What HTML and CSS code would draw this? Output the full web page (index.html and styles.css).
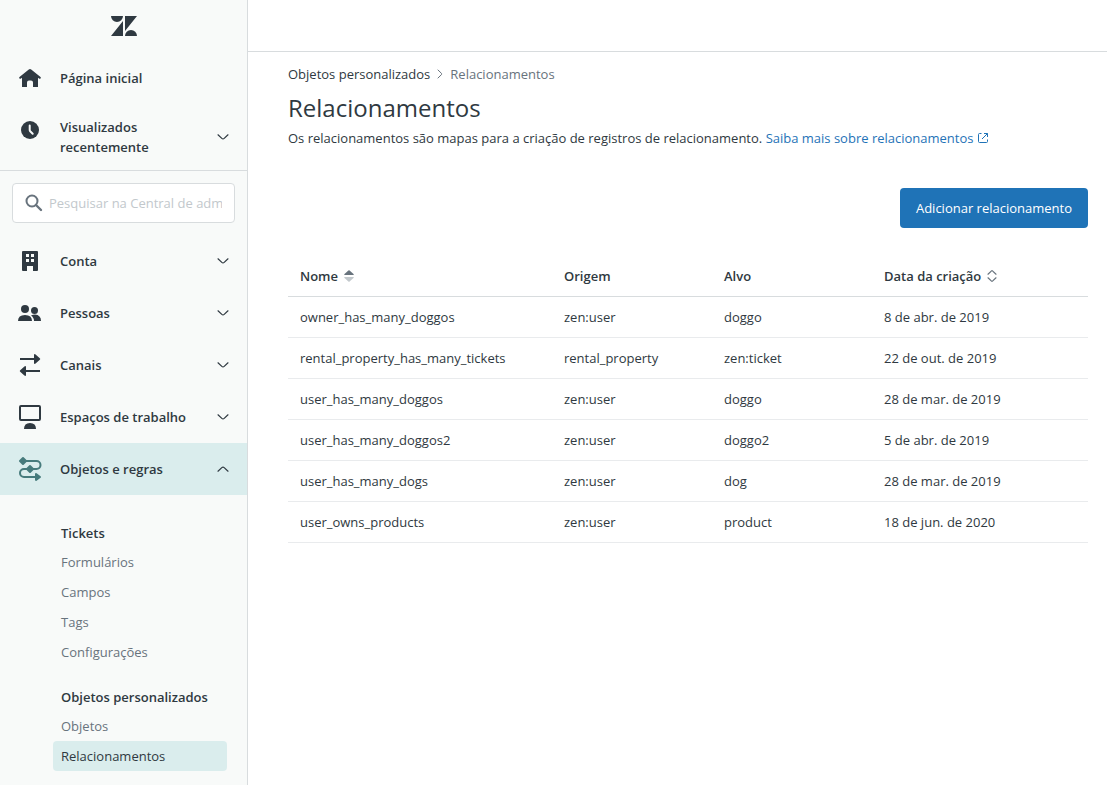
FILE: index.html
```html
<!DOCTYPE html>
<html lang="pt-BR">
<head>
<meta charset="utf-8">
<meta name="viewport" content="width=device-width, initial-scale=1">
<title>Relacionamentos</title>
<link rel="stylesheet" href="styles.css">
</head>
<body>
<svg class="defs" aria-hidden="true">
  <symbol id="chevron" viewBox="0 0 12 6"><path d="M1 .8 4.800 4.400q1.200 1 2.400 0L11 .8" fill="none" stroke="currentColor" stroke-width="1.200" stroke-linecap="round"/></symbol>
</svg>
<div class="app">
  <aside class="sidebar">
    <a class="logo" href="#" aria-label="Zendesk">
      <svg width="26" height="20" viewBox="0 0 26 20" fill="currentColor"><path d="M0 0h12a6 6 0 0 1-12 0zM12 5v15H0zM14 0h12L14 15zM14 20a6 6 0 0 1 12 0z"/></svg>
    </a>
    <nav class="nav">
      <a class="nav-item" href="#">
        <svg class="icon" viewBox="0 0 26 26" fill="currentColor"><path d="M13 4q.6 0 1.200.5L23.500 12q.8.900 0 1.500-.8.600-1.500 0l-1-.7V22h-5v-4.500q0-2-2-2h-2q-2 0-2 2V22H5v-9.200l-1 .7q-.8.600-1.500 0-.8-.7 0-1.500L11.800 4.500Q12.400 4 13 4z"/></svg>
        <span class="label">Página inicial</span>
      </a>
      <button class="nav-item recent" type="button">
        <svg class="icon" viewBox="0 0 26 26"><circle cx="13" cy="13" r="9" fill="currentColor"/><path d="M12.700 8.500v4.500q0 .8.500 1.300l2.500 2.500" fill="none" stroke="#f8f9f9" stroke-width="2" stroke-linecap="round"/></svg>
        <span class="label">Visualizados recentemente</span>
        <svg class="chevron"><use href="#chevron"/></svg>
      </button>
    </nav>
    <div class="search-area">
      <label class="search">
        <svg width="18" height="18" viewBox="0 0 18 18" fill="none" stroke="currentColor" stroke-width="2"><circle cx="7" cy="7" r="5.500"/><path d="m11 11 5 5" stroke-width="2.400" stroke-linecap="round"/></svg>
        <input type="text" aria-label="Pesquisar na Central de administração" placeholder="Pesquisar na Central de administração">
      </label>
    </div>
    <nav class="nav">
      <button class="nav-item" type="button">
        <svg class="icon" viewBox="0 0 26 26" fill="currentColor"><path fill-rule="evenodd" d="M6 3h14q1 0 1 1v18q0 1-1 1h-4v-5h-6v5H6q-1 0-1-1V4q0-1 1-1zM9 6v3h3V6zM14 6v3h3V6zM9 11v3h3v-3zM14 11v3h3v-3z"/></svg>
        <span class="label">Conta</span>
        <svg class="chevron"><use href="#chevron"/></svg>
      </button>
      <button class="nav-item" type="button">
        <svg class="icon" viewBox="0 0 26 26" fill="currentColor"><circle cx="8" cy="9" r="4"/><circle cx="17.500" cy="10.500" r="3.500"/><path d="M1 21q0-6 7-6t7 6zM14 15.500q2-1 4-1 6 .5 6 6.500h-7q0-3.500-3-5.500z"/></svg>
        <span class="label">Pessoas</span>
        <svg class="chevron"><use href="#chevron"/></svg>
      </button>
      <button class="nav-item" type="button">
        <svg class="icon" viewBox="0 0 26 26" fill="currentColor"><path d="M3 6h14V3.200q0-2 1.600-.8l4.200 3.800q1 .8 0 1.600l-4.200 3.800Q17 12.800 17 10.800V8H3zM23 18H9v-2.800q0-2-1.600-.8l-4.200 3.800q-1 .8 0 1.600l4.200 3.800Q9 24.800 9 22.800V20h14z"/></svg>
        <span class="label">Canais</span>
        <svg class="chevron"><use href="#chevron"/></svg>
      </button>
      <button class="nav-item" type="button">
        <svg class="icon" viewBox="0 0 26 26" fill="currentColor"><rect x="3" y="2" width="20" height="14" rx="1" fill="none" stroke="currentColor" stroke-width="2"/><path d="M7 25q0-6 6-6t6 6z"/></svg>
        <span class="label">Espaços de trabalho</span>
        <svg class="chevron"><use href="#chevron"/></svg>
      </button>
      <button class="nav-item active" type="button" aria-expanded="true">
        <svg class="icon" viewBox="0 0 26 26" fill="currentColor"><path d="M6 5h13.500a4 4 0 0 1 0 8H7a4 4 0 0 0 0 8h13" fill="none" stroke="currentColor" stroke-width="2"/><path d="m6 2 3 3-3 3-3-3zM13 10l3 3-3 3-3-3zM19 18l4 3-4 3z" stroke="currentColor" stroke-linejoin="round" stroke-width="2"/></svg>
        <span class="label">Objetos e regras</span>
        <svg class="chevron up"><use href="#chevron"/></svg>
      </button>
    </nav>
    <nav class="subnav" aria-label="Objetos e regras">
      <section>
        <h2>Tickets</h2>
        <a href="#">Formulários</a>
        <a href="#">Campos</a>
        <a href="#">Tags</a>
        <a href="#">Configurações</a>
      </section>
      <section>
        <h2>Objetos personalizados</h2>
        <a href="#">Objetos</a>
        <a class="current" href="#" aria-current="page">Relacionamentos</a>
      </section>
    </nav>
  </aside>
  <div class="page">
    <header class="topbar"></header>
    <main class="content">
      <nav class="breadcrumb" aria-label="Trilha">
        <a href="#">Objetos personalizados</a>
        <svg width="6" height="10" viewBox="0 0 6 10" fill="none" stroke="currentColor" stroke-linecap="round"><path d="m1 1 3.500 3.400q.6.600 0 1.200L1 9"/></svg>
        <span>Relacionamentos</span>
      </nav>
      <h1>Relacionamentos</h1>
      <p class="intro">Os relacionamentos são mapas para a criação de registros de relacionamento. <a href="#">Saiba mais sobre relacionamentos <svg width="12" height="12" viewBox="0 0 12 12" fill="none" stroke="currentColor"><path d="M4.500 1.500h-2q-1 0-1 1v7q0 1 1 1h7q1 0 1-1v-2M5 7l5.500-5.500M7 1.500h3.500V5"/></svg></a></p>
      <div class="actions"><button class="primary" type="button">Adicionar relacionamento</button></div>
      <table>
        <thead>
          <tr>
            <th class="name" scope="col" aria-sort="ascending"><button type="button">Nome <svg width="10" height="12" viewBox="0 0 10 12"><path d="M.5 5Q0 4.600.5 4L4.400.4q.6-.5 1.200 0L9.500 4q.5.600 0 1z" fill="#68737d"/><path d="M.5 7Q0 7.400.5 8l3.900 3.600q.6.500 1.200 0L9.500 8q.5-.6 0-1z" fill="#c2c8cc"/></svg></button></th>
            <th class="mid" scope="col">Origem</th>
            <th class="mid" scope="col">Alvo</th>
            <th scope="col"><button type="button">Data da criação <svg width="10" height="12" viewBox="0 0 10 12" fill="none" stroke="#68737d" stroke-width="1.200" stroke-linecap="round"><path d="M1 4.200 4.500.9q.5-.4 1 0L9 4.200M1 7.800l3.500 3.300q.5.400 1 0L9 7.800"/></svg></button></th>
          </tr>
        </thead>
        <tbody>
          <tr><td>owner_has_many_doggos</td><td>zen:user</td><td>doggo</td><td>8 de abr. de 2019</td></tr>
          <tr><td>rental_property_has_many_tickets</td><td>rental_property</td><td>zen:ticket</td><td>22 de out. de 2019</td></tr>
          <tr><td>user_has_many_doggos</td><td>zen:user</td><td>doggo</td><td>28 de mar. de 2019</td></tr>
          <tr><td>user_has_many_doggos2</td><td>zen:user</td><td>doggo2</td><td>5 de abr. de 2019</td></tr>
          <tr><td>user_has_many_dogs</td><td>zen:user</td><td>dog</td><td>28 de mar. de 2019</td></tr>
          <tr><td>user_owns_products</td><td>zen:user</td><td>product</td><td>18 de jun. de 2020</td></tr>
        </tbody>
      </table>
    </main>
  </div>
</div>
</body>
</html>
```
FILE: styles.css
```css
* { box-sizing: border-box; }
body {
  margin: 0;
  font: 13px/20px "Open Sans", "Noto Sans", sans-serif;
  color: #2f3941;
  background: #fff;
}
a { color: inherit; text-decoration: none; }
button, input { font: inherit; color: inherit; }
button { border: 0; padding: 0; background: none; cursor: pointer; }
.defs { display: none; }

.app { display: flex; min-height: 100vh; }
.sidebar {
  flex: 0 0 248px;
  background: #f8faf9;
  border-right: 1px solid #d8dcde;
}
.logo { display: flex; justify-content: center; padding: 16px 0; }
.nav { display: flex; flex-direction: column; }
.nav-item {
  display: flex;
  align-items: center;
  min-height: 52px;
  padding: 0 18px 0 17px;
  text-align: left;
  font-weight: 600;
}
.nav-item .icon { width: 26px; height: 26px; flex: none; margin-right: 17px; }
.nav-item .label { flex: 1; }
.nav-item.recent { padding-top: 13px; padding-bottom: 13px; }
.recent .icon { align-self: flex-start; }
.recent .label { padding-right: 40px; }
.chevron { width: 12px; height: 6px; flex: none; }
.chevron.up { transform: rotate(180deg); }
.nav-item.active { background: #daeded; }
.active .icon { color: #467b7c; }

.search-area { border-top: 1px solid #d8dcde; padding: 12px; }
.search {
  display: flex;
  align-items: center;
  gap: 6px;
  height: 40px;
  padding: 0 12px;
  border: 1px solid #d8dcde;
  border-radius: 4px;
  background: #fff;
  color: #68737d;
}
.search svg { flex: none; }
.search input {
  flex: 1;
  min-width: 0;
  padding: 0;
  border: 0;
  outline: 0;
  background: none;
}
.search input::placeholder { color: #c2c8cc; }

.subnav { display: grid; gap: 20px; padding: 28px 20px 14px 53px; }
.subnav h2 { margin: 0 0 4px; padding: 0 8px; font-size: 13px; font-weight: 600; line-height: 20px; }
.subnav a {
  display: block;
  padding: 5px 8px;
  border-radius: 4px;
  color: #68737d;
}
.subnav .current { color: #2f3941; background: #daeded; }

.page { flex: 1; min-width: 0; }
.topbar { height: 52px; border-bottom: 1px solid #d8dcde; }
.content { padding: 12px 19px 40px 40px; }
.breadcrumb { display: flex; align-items: center; gap: 7px; color: #68737d; }
.breadcrumb a { color: #2f3941; }
h1 { margin: 8px 0 4px; font-size: 24px; font-weight: 400; line-height: 32px; }
.intro { margin: 0; }
.intro a { color: #1f73b7; }
.intro svg { vertical-align: -1px; }
.actions { display: flex; justify-content: flex-end; margin: 40px 0 28px; }
.primary {
  height: 40px;
  padding: 0 16px;
  border-radius: 4px;
  background: #1f73b7;
  color: #fff;
}
table { width: 100%; border-collapse: separate; border-spacing: 0; table-layout: fixed; }
.name { width: 33%; }
.mid { width: 20%; }
th, td { height: 41px; padding: 0 12px; text-align: left; border-bottom: 1px solid #e9ebed; }
th { font-weight: 600; border-bottom-color: #d8dcde; }
th button { display: inline-flex; align-items: center; gap: 6px; font-weight: 600; }
```
